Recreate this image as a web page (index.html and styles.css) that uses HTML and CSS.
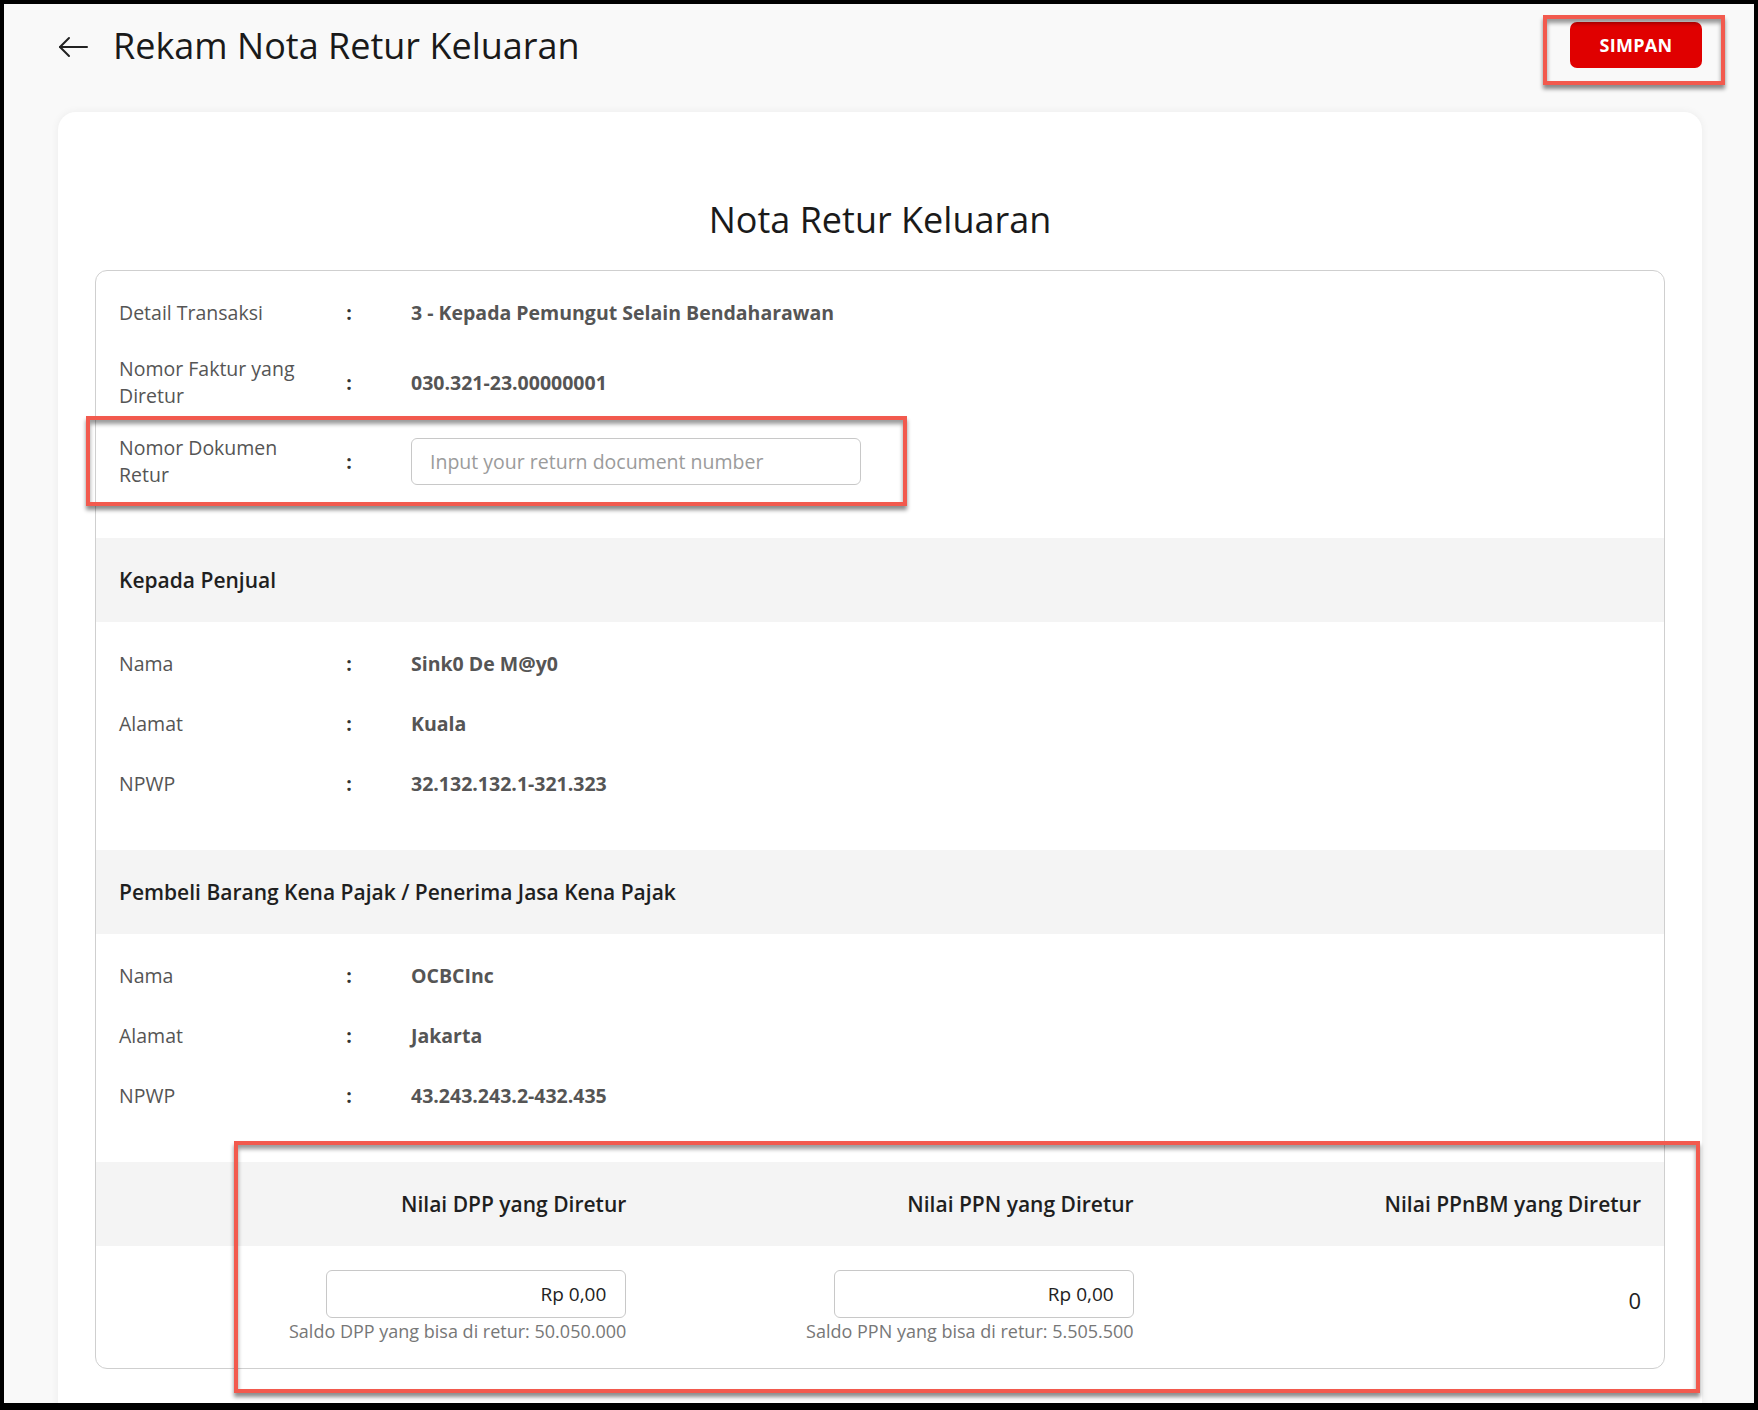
FILE: index.html
```html
<!DOCTYPE html>
<html lang="id">
<head>
<meta charset="utf-8">
<title>Rekam Nota Retur Keluaran</title>
<link rel="stylesheet" href="styles.css">
</head>
<body>
<div class="frame">
  <header class="topbar">
    <button class="back" aria-label="Kembali">
      <svg width="32" height="24" viewBox="0 0 32 24" fill="none" stroke="#222" stroke-width="2" stroke-linecap="round" stroke-linejoin="round">
        <path d="M30 12H3"/>
        <path d="M12 3L3 12L12 21"/>
      </svg>
    </button>
    <h1 class="page-title">Rekam Nota Retur Keluaran</h1>
    <button class="save">SIMPAN</button>
  </header>

  <main class="card">
    <h2 class="card-title">Nota Retur Keluaran</h2>
    <section class="box">
      <div class="group group-top">
        <div class="row">
          <div class="label">Detail Transaksi</div>
          <div class="colon">:</div>
          <div class="value">3 - Kepada Pemungut Selain Bendaharawan</div>
        </div>
        <div class="row row-2">
          <div class="label">Nomor Faktur yang Diretur</div>
          <div class="colon">:</div>
          <div class="value">030.321-23.00000001</div>
        </div>
        <div class="row row-3">
          <div class="label">Nomor Dokumen Retur</div>
          <div class="colon">:</div>
          <div class="value"><input class="text-input" type="text" placeholder="Input your return document number"></div>
        </div>
      </div>

      <div class="band">Kepada Penjual</div>
      <div class="group">
        <div class="line"><div class="label">Nama</div><div class="colon">:</div><div class="value">Sink0 De M@y0</div></div>
        <div class="line"><div class="label">Alamat</div><div class="colon">:</div><div class="value">Kuala</div></div>
        <div class="line"><div class="label">NPWP</div><div class="colon">:</div><div class="value">32.132.132.1-321.323</div></div>
      </div>

      <div class="band">Pembeli Barang Kena Pajak / Penerima Jasa Kena Pajak</div>
      <div class="group">
        <div class="line"><div class="label">Nama</div><div class="colon">:</div><div class="value">OCBCInc</div></div>
        <div class="line"><div class="label">Alamat</div><div class="colon">:</div><div class="value">Jakarta</div></div>
        <div class="line"><div class="label">NPWP</div><div class="colon">:</div><div class="value">43.243.243.2-432.435</div></div>
      </div>

      <div class="band cols">
        <div class="col-head">Nilai DPP yang Diretur</div>
        <div class="col-head">Nilai PPN yang Diretur</div>
        <div class="col-head">Nilai PPnBM yang Diretur</div>
      </div>
      <div class="cols amounts">
        <div class="amount">
          <div class="amount-input">Rp 0,00</div>
          <div class="hint">Saldo DPP yang bisa di retur: 50.050.000</div>
        </div>
        <div class="amount">
          <div class="amount-input">Rp 0,00</div>
          <div class="hint">Saldo PPN yang bisa di retur: 5.505.500</div>
        </div>
        <div class="amount">
          <div class="amount-plain">0</div>
        </div>
      </div>
    </section>
  </main>

  <div class="mark mark-save"></div>
  <div class="mark mark-doc"></div>
  <div class="mark mark-values"></div>
</div>
</body>
</html>
```

FILE: styles.css
```css
* { box-sizing: border-box; }

html, body {
  margin: 0;
  padding: 0;
  background: #000;
}

body {
  font-family: "Open Sans", "Noto Sans", sans-serif;
  color: #222;
}

.frame {
  position: relative;
  margin: 4px 4px 0 4px;
  height: 1399px;
  overflow: hidden;
  background: #f9f9f9;
  padding: 0 52px 0 54px;
}

.topbar {
  height: 84px;
  display: flex;
  align-items: center;
}

.back {
  width: 32px;
  height: 24px;
  padding: 0;
  margin: 2px 0 0 -1px;
  border: 0;
  background: none;
  display: flex;
}

.page-title {
  margin: 0 0 0 24px;
  font-size: 36px;
  font-weight: 400;
  line-height: 1;
  color: #1a1a1a;
  flex: 1;
}

.save {
  width: 132px;
  height: 46px;
  margin-top: -2px;
  border: 0;
  border-radius: 7px;
  background: #e00000;
  color: #fff;
  font-family: "Open Sans", sans-serif;
  font-weight: 700;
  font-size: 18px;
  letter-spacing: 0.3px;
}

.card {
  margin-top: 24px;
  background: #fff;
  border-radius: 18px;
  box-shadow: 0 0 8px rgba(0, 0, 0, 0.06);
  padding: 84px 37px 60px;
}

.card-title {
  margin: 0;
  text-align: center;
  font-size: 36px;
  font-weight: 400;
  line-height: 48px;
  color: #1a1a1a;
}

.box {
  margin-top: 26px;
  border: 1px solid #cfcfcf;
  border-radius: 12px;
  overflow: hidden;
}

.group {
  padding: 11px 23px 37px;
}

.group-top {
  padding: 14px 23px 50px;
}

.row, .line {
  display: grid;
  grid-template-columns: 190px 80px 1fr;
  align-items: center;
}

.row {
  min-height: 54px;
}

.row-2 { margin-top: 16px; }
.row-3 { margin-top: 25px; }

.line {
  height: 60px;
}

.label {
  font-size: 19.5px;
  line-height: 27px;
  color: #555;
}

.colon {
  text-align: center;
  font-size: 19.5px;
  font-weight: 700;
  color: #333;
}

.value {
  padding-left: 22px;
  font-size: 19.5px;
  font-weight: 700;
  line-height: 27px;
  color: #555;
}

.text-input {
  display: block;
  width: 450px;
  height: 47px;
  border: 1px solid #c8c8c8;
  border-radius: 6px;
  padding: 0 18px;
  font-family: "Open Sans", sans-serif;
  font-size: 19.5px;
  color: #222;
  background: #fff;
}

.text-input::placeholder {
  color: #9b9b9b;
}

.band {
  height: 84px;
  background: #f4f4f4;
  padding: 0 23px;
  display: flex;
  align-items: center;
  font-size: 21px;
  font-weight: 600;
  color: #1f1f1f;
}

.cols {
  display: grid;
  grid-template-columns: 1fr 1fr 1fr;
}

.band.cols {
  display: grid;
  align-items: center;
}

.col-head {
  text-align: right;
}

.amounts {
  padding: 24px 23px 26px;
}

.amount {
  display: flex;
  flex-direction: column;
  align-items: flex-end;
}

.amount-input {
  width: 300px;
  height: 48px;
  border: 1px solid #c8c8c8;
  border-radius: 6px;
  padding: 0 19px;
  display: flex;
  align-items: center;
  justify-content: flex-end;
  font-size: 19px;
  color: #222;
}

.hint {
  margin-top: 2px;
  font-size: 18px;
  line-height: 22px;
  color: #777;
}

.amount-plain {
  margin-top: 6px;
  height: 48px;
  display: flex;
  align-items: center;
  font-size: 22px;
  color: #222;
}

.mark {
  position: absolute;
  border: 4px solid #f25a4e;
  box-shadow: 0 4px 4px rgba(0, 0, 0, 0.45), inset 0 4px 4px rgba(0, 0, 0, 0.4);
  pointer-events: none;
}

.mark-save {
  left: 1539px;
  top: 11px;
  width: 182px;
  height: 70px;
}

.mark-doc {
  left: 82px;
  top: 412px;
  width: 821px;
  height: 90px;
}

.mark-values {
  left: 230px;
  top: 1137px;
  width: 1466px;
  height: 252px;
}
```
